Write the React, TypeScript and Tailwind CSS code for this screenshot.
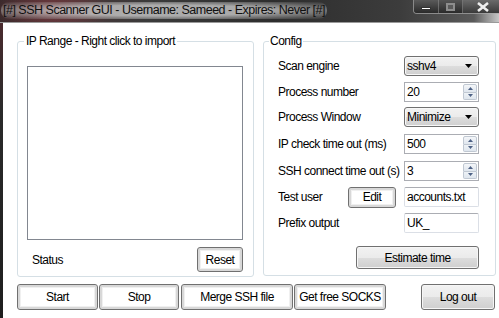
import React from "react";

const font = { fontFamily: '"Liberation Sans", Arial, sans-serif' };

function WinButton({ label, className = "", gray = false }: { label: string; className?: string; gray?: boolean }) {
  return (
    <div
      className={
        "flex items-center justify-center rounded-[3px] border border-[#707070] text-[12px] text-black " +
        (gray
          ? "bg-[linear-gradient(to_bottom,#f2f2f2_0%,#ebebeb_50%,#dddddd_51%,#cfcfcf_100%)] shadow-[inset_0_0_0_1px_#f6f6f6]"
          : "bg-white shadow-[inset_0_0_0_2px_#d8d8d8,inset_0_0_0_3px_#f0f0f0]") +
        " " +
        className
      }
    >
      {label}
    </div>
  );
}

function Combo({ value }: { value: string }) {
  return (
    <div className="flex h-[20px] w-[75px] items-center justify-between rounded-[3px] border border-[#707070] bg-[linear-gradient(to_bottom,#f2f2f2_0%,#ebebeb_50%,#dddddd_51%,#cfcfcf_100%)] pl-[2px] pr-[6px] text-[12px] text-black shadow-[inset_0_0_0_1px_#f8f8f8]">
      <span>{value}</span>
      <svg width="7" height="4" viewBox="0 0 7 4">
        <polygon points="0,0 7,0 3.5,4" fill="#000" />
      </svg>
    </div>
  );
}

function Spin({ value }: { value: string }) {
  return (
    <div className="flex h-[20px] w-[75px] items-stretch border border-[#abadb3] bg-white text-[12px] text-black">
      <div className="flex flex-1 items-center pl-[2px]">{value}</div>
      <div className="flex w-[15px] flex-col py-[1px] pr-[1px]">
        <div className="flex flex-1 items-center justify-center rounded-t-[2px] border border-[#c0c8d2] bg-[linear-gradient(to_bottom,#f4f6f9,#dfe6ee)]">
          <svg width="5" height="3" viewBox="0 0 5 3">
            <polygon points="0,3 5,3 2.5,0" fill="#4d6185" />
          </svg>
        </div>
        <div className="flex flex-1 items-center justify-center rounded-b-[2px] border border-t-0 border-[#c0c8d2] bg-[linear-gradient(to_bottom,#eef2f6,#dfe6ee)]">
          <svg width="5" height="3" viewBox="0 0 5 3">
            <polygon points="0,0 5,0 2.5,3" fill="#4d6185" />
          </svg>
        </div>
      </div>
    </div>
  );
}

function TextBox({ value }: { value: string }) {
  return (
    <div className="flex h-[20px] w-[75px] items-center rounded-[2px] border border-[#dbdfe6] border-t-[#abadb3] bg-white pl-[2px] text-[12px] text-black">
      {value}
    </div>
  );
}

function Row({ label, children, className = "" }: { label: string; children: React.ReactNode; className?: string }) {
  return (
    <div className={"flex h-[20px] items-center justify-between pl-[14px] pr-[16px] " + className}>
      <span className="whitespace-nowrap text-[12px] text-black">{label}</span>
      {children}
    </div>
  );
}

export default function App() {
  return (
    <div className="relative h-[318px] w-[499px] overflow-hidden bg-white tracking-[-0.5px]" style={font}>
      {/* Title bar */}
      <div className="relative flex h-[22px] items-start bg-[linear-gradient(to_right,#3b2a2c_0%,#4a3436_10%,#3a3a3a_30%,#2d2d2d_55%,#3c3c3c_80%,#5a5a5a_95%,#c8c8c8_100%)]">
        <div className="absolute inset-0 bg-[radial-gradient(ellipse_60px_22px_at_55px_10px,rgba(170,60,70,0.45),transparent)]" />
        <div className="relative ml-[1px] mt-[2px] whitespace-nowrap rounded-[8px] bg-[radial-gradient(ellipse_at_center,rgba(200,200,200,0.8)_45%,rgba(170,170,170,0.35)_80%,transparent_100%)] px-[2px] text-[12.5px] leading-[17px] tracking-[-0.5px] text-[#101010]">
          [#] SSH Scanner GUI - Username: Sameed - Expires: Never [#]
        </div>
        <div className="absolute left-[413px] top-0 flex h-[14px] overflow-hidden rounded-bl-[4px] border border-r-0 border-t-0 border-[#a8a8a8]/70">
          <div className="flex w-[25px] items-center justify-center border-r border-[#8a8a8a]/60 bg-[linear-gradient(to_bottom,#5a5a5a,#2a2a2a)]">
            <div className="mt-[3px] h-[3px] w-[10px] border border-[#333] bg-white" />
          </div>
          <div className="flex w-[24px] items-center justify-center border-r border-[#8a8a8a]/60 bg-[linear-gradient(to_bottom,#555,#2a2a2a)]">
            <div className="h-[8px] w-[9px] border-[2px] border-[#8d8d8d] bg-[#5a5a5a]" />
          </div>
          <div className="flex w-[40px] items-center justify-center bg-[linear-gradient(to_bottom,#6a6a6a,#3a3a3a)]">
            <svg width="12" height="10" viewBox="0 0 12 10">
              <path d="M1 1 L11 9 M11 1 L1 9" stroke="#eeeeee" strokeWidth="2.6" />
            </svg>
          </div>
        </div>
      </div>
      <div className="h-[1px] bg-[#9a9a9a]" />

      {/* Client area */}
      <div className="flex h-[295px]">
        <div className="w-[3px] bg-[linear-gradient(to_bottom,#4a2a2e,#2a2a2a_30%,#1e1e1e)]" />
        <div className="flex flex-1 flex-col pl-[14px] pt-[18px]">
          <div className="flex gap-[9px]">
            {/* IP Range group */}
            <div className="relative h-[236px] w-[237px] rounded-[3px] border border-[#d5dfe5]">
              <span className="absolute left-[6px] top-[-8px] whitespace-nowrap bg-white px-[2px] text-[12px] leading-[14px] text-black">
                IP Range - Right click to import
              </span>
              <div className="ml-[9px] mt-[24px] h-[174px] w-[216px] border border-[#828790]" />
              <div className="ml-[14px] mr-[10px] mt-[7px] flex h-[25px] items-center justify-between">
                <span className="text-[12px] text-black">Status</span>
                <WinButton label="Reset" className="h-[25px] w-[46px]" />
              </div>
            </div>

            {/* Config group */}
            <div className="relative h-[235px] w-[233px] rounded-[3px] border border-[#d5dfe5]">
              <span className="absolute left-[5px] top-[-8px] bg-white px-[1px] text-[12px] leading-[14px] text-black">
                Config
              </span>
              <Row label="Scan engine" className="mt-[14px]">
                <Combo value="sshv4" />
              </Row>
              <Row label="Process number" className="mt-[6px]">
                <Spin value="20" />
              </Row>
              <Row label="Process Window" className="mt-[5px]">
                <Combo value="Minimize" />
              </Row>
              <Row label="IP check time out (ms)" className="mt-[7px]">
                <Spin value="500" />
              </Row>
              <Row label="SSH connect time out (s)" className="mt-[7px]">
                <Spin value="3" />
              </Row>
              <div className="mt-[6px] flex h-[20px] items-center pl-[14px] pr-[16px]">
                <span className="w-[70px] text-[12px] text-black">Test user</span>
                <WinButton label="Edit" className="h-[21px] w-[48px]" />
                <div className="ml-auto">
                  <TextBox value="accounts.txt" />
                </div>
              </div>
              <Row label="Prefix output" className="mt-[6px]">
                <TextBox value="UK_" />
              </Row>
              <div className="mt-[13px] flex justify-end pr-[16px]">
                <WinButton label="Estimate time" gray className="h-[23px] w-[123px]" />
              </div>
            </div>
          </div>

          {/* Bottom buttons */}
          <div className="mt-[7px] flex">
            <WinButton label="Start" className="h-[26px] w-[81px]" />
            <WinButton label="Stop" className="ml-[1px] h-[26px] w-[80px]" />
            <WinButton label="Merge SSH file" className="ml-[2px] h-[26px] w-[112px]" />
            <WinButton label="Get free SOCKS" className="ml-[1px] h-[26px] w-[92px]" />
            <WinButton label="Log out" gray className="ml-[35px] h-[26px] w-[74px]" />
          </div>
        </div>
      </div>
    </div>
  );
}
